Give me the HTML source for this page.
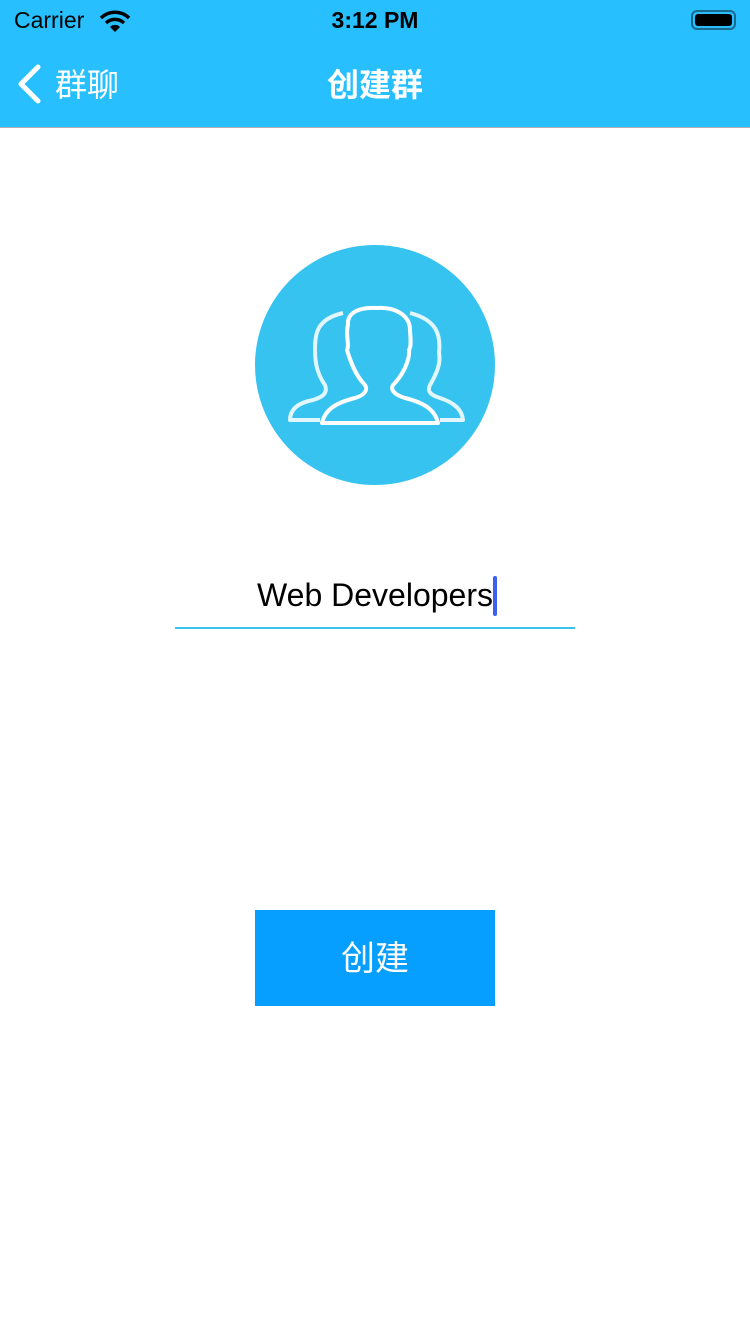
<!DOCTYPE html>
<html><head><meta charset="utf-8"><style>
*{margin:0;padding:0;box-sizing:border-box}
body{width:750px;height:1334px;background:#fff;position:relative;overflow:hidden;font-family:"Liberation Sans","Noto Sans CJK SC",sans-serif}
.nav{position:absolute;left:0;top:0;width:750px;height:128px;background:#27bffe;border-bottom:1px solid #b0b0b0}
.abs{position:absolute}
</style></head><body>
<div class="nav">
  <div class="abs" style="left:14px;top:7px;font-size:23px;color:#000">Carrier</div>
  <svg class="abs" style="left:99px;top:9px" width="32" height="24" viewBox="0 0 32 24">
    <path d="M2,9 A20,20 0 0 1 30,9" stroke="#000" stroke-width="3.5" fill="none"/>
    <path d="M7,14 A13,13 0 0 1 25,14" stroke="#000" stroke-width="3.5" fill="none"/>
    <path d="M16,23 L11,18 A7,7 0 0 1 21,18 Z" fill="#000"/>
  </svg>
  <div class="abs" style="left:0;width:750px;top:7px;text-align:center;font-size:23px;font-weight:bold;color:#000">3:12 PM</div>
  <div class="abs" style="left:691px;top:10px;width:45px;height:20px;border:2px solid #1a6a90;border-radius:6px;padding:2px"><div style="width:100%;height:100%;background:#000;border-radius:3px"></div></div>
  <svg class="abs" style="left:14px;top:64px" width="28" height="40" viewBox="0 0 28 40"><path d="M24,3 L7,20 L24,37" stroke="#fff" stroke-width="5" fill="none" stroke-linecap="round" stroke-linejoin="round"/></svg>
  <div class="abs" style="left:55px;top:60px;font-size:32px;color:#fff">群聊</div>
  <div class="abs" style="left:0;width:750px;top:60px;text-align:center;font-size:32px;font-weight:bold;color:#fff">创建群</div>
</div>
<svg class="abs" style="left:255px;top:245px" width="240" height="240" viewBox="0 0 240 240">
  <circle cx="120" cy="120" r="120" fill="#36c3f0"/>
  <g stroke="#fff" stroke-width="4" fill="none" stroke-linejoin="round">
    <path d="M67,178 L183,178 C180,165 170,158 150,153 C140,150 135,145 138,140 C148,130 155,115 154,105 C157,100 155,90 155,85 C155,70 140,62 122,63 C100,62 92,70 93,80 C90,90 95,100 92,105 C95,115 100,130 110,140 C113,145 110,150 100,153 C80,158 70,165 67,178 Z"/>
    <path d="M65,175 L35,175 C35,165 42,158 58,155 C68,152 73,148 70,140 C63,130 60,120 60,105 C60,88 62,74 88,68" opacity="0.85"/>
    <path d="M185,175 L208,175 C207,165 200,158 185,153 C175,150 172,146 175,140 C182,128 186,118 184,108 C186,90 182,75 155,68" opacity="0.85"/>
  </g>
</svg>
<div class="abs" style="left:175px;width:400px;top:577px;text-align:center;font-size:32px;color:#000"><span style="position:relative">Web Developers<span style="position:absolute;right:-4px;top:-1px;width:4px;height:40px;background:#3f5ff0;border-radius:2px"></span></span></div>
<div class="abs" style="left:175px;top:627px;width:400px;height:2px;background:#36c3f0"></div>
<div class="abs" style="left:255px;top:910px;width:240px;height:96px;background:#069eff;color:#fff;font-size:34px;text-align:center;line-height:98px">创建</div>
</body></html>
